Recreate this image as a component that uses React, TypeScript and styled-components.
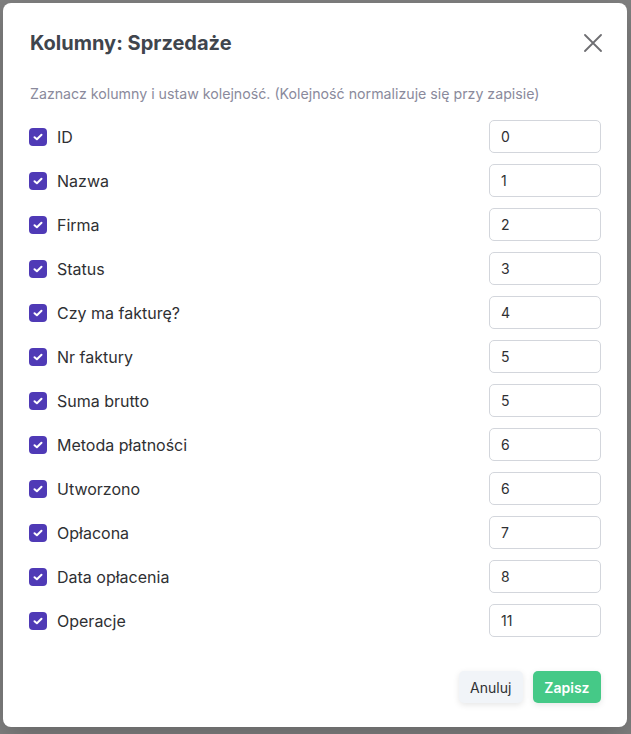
import { useState } from "react";
import styled, { createGlobalStyle } from "styled-components";

const GlobalStyle = createGlobalStyle`
  * { box-sizing: border-box; }
  html, body { margin: 0; padding: 0; }
  body {
    font-family: Inter, "Noto Sans", "Liberation Sans", sans-serif;
    background: #808080;
  }
`;

const Overlay = styled.div`
  width: 631px;
  height: 734px;
  background: #808080;
  padding: 3px 4px 7px 3px;
  display: flex;
`;

const Modal = styled.div`
  flex: 1;
  background: #ffffff;
  border-radius: 8px;
  padding: 26px 26px 24px 26px;
  display: flex;
  flex-direction: column;
  box-shadow: 0 10px 30px rgba(0, 0, 0, 0.2);
`;

const Header = styled.div`
  display: flex;
  align-items: center;
  justify-content: space-between;
  height: 28px;
`;

const Title = styled.h2`
  margin: 0 0 0 1px;
  font-size: 20px;
  font-weight: 700;
  color: #40454d;
`;

const CloseButton = styled.button`
  border: none;
  background: none;
  padding: 0;
  width: 18px;
  height: 18px;
  margin-right: -1px;
  display: flex;
  align-items: center;
  justify-content: center;
  cursor: pointer;
`;

const Hint = styled.p`
  margin: 27px 0 0 1px;
  font-size: 14.2px;
  line-height: 20px;
  color: #8a8a9c;
`;

const List = styled.div`
  margin-top: 16px;
  display: flex;
  flex-direction: column;
  gap: 11px;
`;

const Row = styled.div`
  display: flex;
  align-items: center;
  justify-content: space-between;
  height: 33px;
`;

const Label = styled.label`
  display: flex;
  align-items: center;
  gap: 10px;
  font-size: 16px;
  font-weight: 400;
  color: #2f3033;
  cursor: pointer;
`;

const Box = styled.span<{ $checked: boolean }>`
  width: 18px;
  height: 18px;
  border-radius: 4px;
  background: ${(p) => (p.$checked ? "#4f3ab6" : "#ffffff")};
  border: ${(p) => (p.$checked ? "none" : "1px solid #c4c7cf")};
  display: flex;
  align-items: center;
  justify-content: center;
`;

const OrderInput = styled.input`
  width: 112px;
  height: 33px;
  border: 1px solid #d3d6dc;
  border-radius: 5px;
  padding: 0 11px;
  font-family: inherit;
  font-size: 14px;
  color: #2f3033;
  outline: none;
`;

const Footer = styled.div`
  margin-top: 34px;
  display: flex;
  justify-content: flex-end;
  gap: 10px;
`;

const Button = styled.button<{ $primary?: boolean }>`
  height: 32px;
  padding: 0 11.5px;
  border: none;
  border-radius: 5px;
  font-family: inherit;
  font-size: 14px;
  font-weight: ${(p) => (p.$primary ? 600 : 400)};
  color: ${(p) => (p.$primary ? "#ffffff" : "#2f3033")};
  background: ${(p) => (p.$primary ? "#45c987" : "#f1f4f8")};
  box-shadow: 0 2px 6px rgba(0, 0, 0, 0.1);
  cursor: pointer;
`;

const columns = [
  { name: "ID", order: "0" },
  { name: "Nazwa", order: "1" },
  { name: "Firma", order: "2" },
  { name: "Status", order: "3" },
  { name: "Czy ma fakturę?", order: "4" },
  { name: "Nr faktury", order: "5" },
  { name: "Suma brutto", order: "5" },
  { name: "Metoda płatności", order: "6" },
  { name: "Utworzono", order: "6" },
  { name: "Opłacona", order: "7" },
  { name: "Data opłacenia", order: "8" },
  { name: "Operacje", order: "11" },
];

function Check() {
  return (
    <svg width="10" height="8" viewBox="0 0 10 8" fill="none">
      <path
        d="M1.5 4.2 L3.9 6.3 L8.5 1.7"
        stroke="#ffffff"
        strokeWidth="2"
        strokeLinecap="round"
        strokeLinejoin="round"
      />
    </svg>
  );
}

function App() {
  const [cols, setCols] = useState(
    columns.map((c) => ({ ...c, checked: true }))
  );

  const toggle = (i: number) =>
    setCols(cols.map((c, j) => (j === i ? { ...c, checked: !c.checked } : c)));

  const setOrder = (i: number, v: string) =>
    setCols(cols.map((c, j) => (j === i ? { ...c, order: v } : c)));

  return (
    <>
      <GlobalStyle />
      <Overlay>
        <Modal>
          <Header>
            <Title>Kolumny: Sprzedaże</Title>
            <CloseButton aria-label="Zamknij">
              <svg width="18" height="18" viewBox="0 0 18 18">
                <path
                  d="M1 1 L17 17 M17 1 L1 17"
                  stroke="#6e6e72"
                  strokeWidth="1.8"
                  strokeLinecap="round"
                />
              </svg>
            </CloseButton>
          </Header>
          <Hint>
            Zaznacz kolumny i ustaw kolejność. (Kolejność normalizuje się przy
            zapisie)
          </Hint>
          <List>
            {cols.map((c, i) => (
              <Row key={c.name}>
                <Label onClick={() => toggle(i)}>
                  <Box $checked={c.checked}>{c.checked && <Check />}</Box>
                  {c.name}
                </Label>
                <OrderInput
                  value={c.order}
                  onChange={(e) => setOrder(i, e.target.value)}
                />
              </Row>
            ))}
          </List>
          <Footer>
            <Button>Anuluj</Button>
            <Button $primary>Zapisz</Button>
          </Footer>
        </Modal>
      </Overlay>
    </>
  );
}

export default App;
